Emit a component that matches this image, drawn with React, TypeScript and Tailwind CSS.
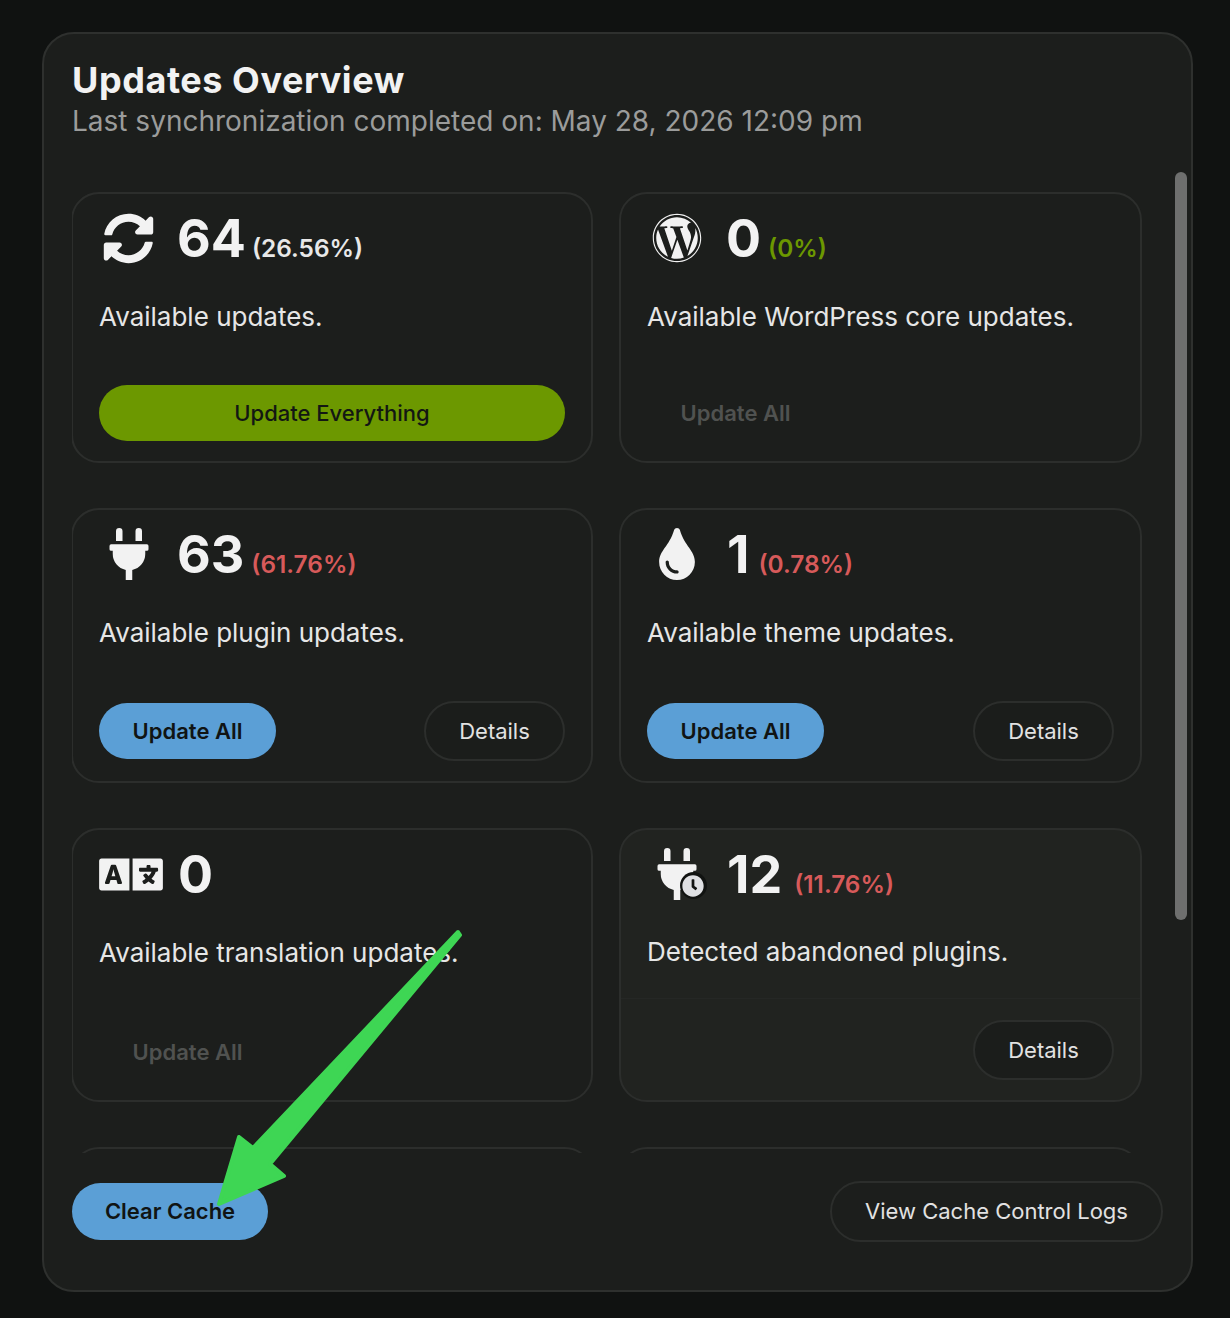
import React from "react";
import { FaSyncAlt, FaWordpress, FaPlug, FaTint, FaLanguage, FaClock } from "react-icons/fa";

function UpdateAll({ disabled }: { disabled?: boolean }) {
  return disabled ? (
    <div className="flex h-[56px] w-[177px] items-center justify-center text-[22px] font-semibold text-[#505250]">Update All</div>
  ) : (
    <div className="flex h-[56px] w-[177px] items-center justify-center rounded-full bg-[#5b9fd6] text-[22px] font-semibold text-[#101414]">Update All</div>
  );
}

function Details() {
  return (
    <div className="flex h-[60px] w-[141px] items-center justify-center rounded-full border-2 border-[#2c2e2c] bg-[#1b1d1b] text-[22px] text-[#e2e2e2]">Details</div>
  );
}

function Head({ icon, num, pct, color, start, numMl, pctMl }: { icon: React.ReactNode; num: string; pct?: string; color?: string; start?: boolean; numMl: string; pctMl?: string }) {
  return (
    <div className="flex h-[60px] items-center">
      <div className={start ? "flex h-[60px] w-[79px] shrink-0 items-center justify-start" : "flex h-[60px] w-[59px] mr-[20px] shrink-0 items-center justify-center"}>{icon}</div>
      <div className="flex items-baseline pt-[2px]">
        <span className={`${numMl} text-[52px] leading-[60px] font-bold text-[#f2f2f2]`}>{num}</span>
        {pct && <span className={`${pctMl} text-[24.4px] font-semibold ${color}`}>{pct}</span>}
      </div>
    </div>
  );
}

function Card({ h, bg, children }: { h: string; bg?: string; children: React.ReactNode }) {
  return (
    <div className={`flex flex-col rounded-[28px] border-2 border-[#2c2e2c] px-[26px] pt-[14px] pb-[20px] ${h} ${bg ?? ""}`}>{children}</div>
  );
}

function Desc({ children }: { children: React.ReactNode }) {
  return <p className="mt-[29px] text-[26px] leading-[40px] text-[#e6e6e6] whitespace-nowrap">{children}</p>;
}

export default function App() {
  return (
    <div className="h-[1318px] w-[1230px] bg-[#101211] pt-[32px] pl-[42px] antialiased" style={{ fontFamily: "Inter, sans-serif" }}>
      <div className="relative flex h-[1260px] w-[1151px] flex-col rounded-[32px] border-2 border-[#2e302e] bg-[#1c1e1c] pl-[28px]">
        <div className="pt-[24px]">
          <h1 className="text-[36px] leading-[44px] font-bold tracking-[0.56px] text-[#f2f2f2]">Updates Overview</h1>
          <p className="text-[28px] leading-[38px] text-[#9b9c9b]">Last synchronization completed on: May 28, 2026 12:09 pm</p>
        </div>
        <div className="relative mt-[32px] h-[981px] overflow-hidden">
          <div className="grid w-[1071px] grid-cols-[522px_523px] gap-x-[26px] gap-y-[45px] pt-[20px] -ml-[1px]">
            <Card h="h-[271px]">
              <Head numMl="-ml-[1px]" pctMl="ml-[6px]" icon={<FaSyncAlt className="h-[51px] w-[51px] text-[#f2f2f2]" />} num="64" pct="(26.56%)" color="text-[#e8e8e8]" />
              <Desc>Available updates.</Desc>
              <div className="mt-auto">
                <div className="flex h-[56px] w-full items-center justify-center rounded-full bg-[#6c9800] text-[22px] font-medium text-[#131713]">Update Everything</div>
              </div>
            </Card>
            <Card h="h-[271px]">
              <Head numMl="ml-0" pctMl="ml-[7px]" icon={<FaWordpress className="h-[50px] w-[50px] text-[#f2f2f2]" />} num="0" pct="(0%)" color="text-[#6c9800]" />
              <Desc>Available WordPress core updates.</Desc>
              <div className="mt-auto"><UpdateAll disabled /></div>
            </Card>
            <Card h="h-[275px]">
              <Head numMl="-ml-[1px]" pctMl="ml-[7px]" icon={<FaPlug className="h-[52px] w-[52px] text-[#f2f2f2]" />} num="63" pct="(61.76%)" color="text-[#d75a5a]" />
              <Desc>Available plugin updates.</Desc>
              <div className="mt-auto flex items-center justify-between"><UpdateAll /><Details /></div>
            </Card>
            <Card h="h-[275px]">
              <Head numMl="ml-[1px]" pctMl="ml-[9px]" icon={<FaTint className="h-[52px] w-[52px] text-[#f2f2f2]" />} num="1" pct="(0.78%)" color="text-[#d75a5a]" />
              <Desc>Available theme updates.</Desc>
              <div className="mt-auto flex items-center justify-between"><UpdateAll /><Details /></div>
            </Card>
            <Card h="h-[274px]">
              <Head numMl="ml-0" start icon={<FaLanguage className="h-[51px] w-[64px] shrink-0 text-[#f2f2f2]" />} num="0" />
              <Desc>Available translation updates.</Desc>
              <div className="mt-auto"><UpdateAll disabled /></div>
            </Card>
            <Card h="h-[274px]" bg="bg-[#212320]">
              <Head numMl="ml-[1px]" pctMl="ml-[12px]" icon={
                <span className="relative block h-[52px] w-[52px]">
                  <FaPlug className="h-[52px] w-[52px] text-[#f2f2f2]" />
                  <span className="absolute -right-[4px] bottom-[1px] flex h-[27px] w-[27px] items-center justify-center rounded-full bg-[#111311]">
                    <FaClock className="h-[22px] w-[22px] text-[#dfe0e3]" />
                  </span>
                </span>
              } num="12" pct="(11.76%)" color="text-[#d75a5a]" />
              <p className="mt-[28px] text-[26px] leading-[40px] text-[#e6e6e6] whitespace-nowrap">Detected abandoned plugins.</p>
              <div className="mt-auto -mx-[26px] flex justify-end border-t border-[#252725] px-[26px] pt-[21px]"><Details /></div>
            </Card>
            <Card h="h-[274px]"><div /></Card>
            <Card h="h-[274px]"><div /></Card>
          </div>
          <div className="absolute top-0 left-[1103px] h-[748px] w-[12px] rounded-full bg-[#6e6f6e]" />
        </div>
        <div className="absolute left-[28px] top-[1149px] flex h-[57px] w-[196px] items-center justify-center rounded-full bg-[#5b9fd6] text-[22px] font-semibold text-[#101414]">Clear Cache</div>
        <div className="absolute left-[786px] top-[1147px] flex h-[61px] w-[333px] items-center justify-center rounded-full border-2 border-[#2c2e2c] text-[22px] text-[#e2e2e2]">View Cache Control Logs</div>
      </div>
      <svg className="absolute left-0 top-0" width="1230" height="1318" viewBox="0 0 1230 1318" fill="#3ed654" stroke="#3ed654" strokeLinejoin="round">
        <polygon strokeWidth="4" points="458,932 460,935 270,1164 284,1176 219,1204 239,1137 253,1148" />
      </svg>
    </div>
  );
}
